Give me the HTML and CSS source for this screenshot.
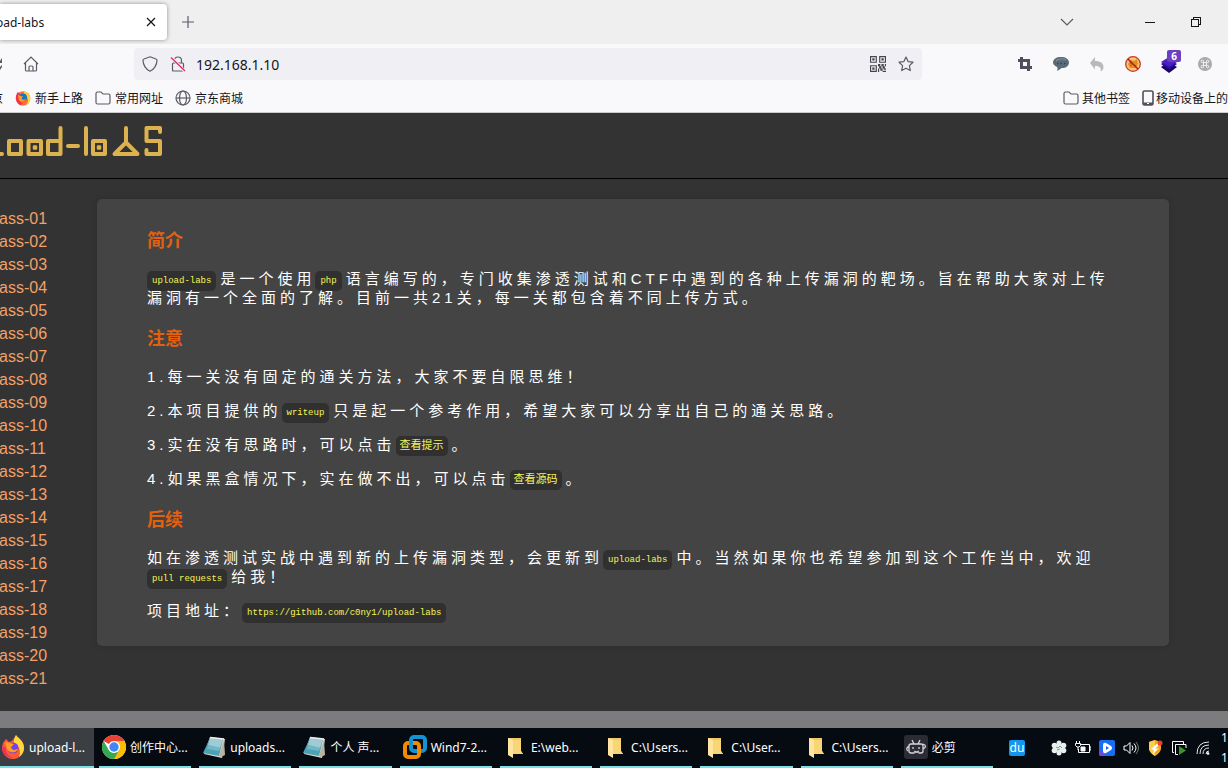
FILE: index.html
```html
<!DOCTYPE html>
<html lang="zh-CN">
<head>
<meta charset="utf-8">
<title>upload-labs</title>
<link rel="stylesheet" href="styles.css">
</head>
<body>
<div class="screen">
  <div class="tabstrip">
    <div class="tab">
      <span class="tab-title">oad-labs</span>
      <button class="icon-btn" aria-label="关闭标签页"><svg width="10" height="10" viewBox="0 0 10 10" class="line"><path d="M1 1l8 8M9 1L1 9"/></svg></button>
    </div>
    <button class="icon-btn new-tab" aria-label="新建标签页"><svg width="14" height="14" viewBox="0 0 14 14" class="line grey"><path d="M7 1v12M1 7h12"/></svg></button>
    <div class="window-controls">
      <button class="icon-btn" aria-label="列出标签页"><svg width="14" height="10" viewBox="0 0 14 10" class="line grey"><path d="M1 2l6 6 6-6"/></svg></button>
      <button class="icon-btn minimize" aria-label="最小化"><svg width="10" height="10" viewBox="0 0 10 10" class="line crisp"><path d="M0 5.5h10"/></svg></button>
      <button class="icon-btn" aria-label="还原"><svg width="10" height="10" viewBox="0 0 10 10" class="line crisp"><path d="M.5 2.5h7v7h-7zM2.500 2.500v-2h7v7h-2"/></svg></button>
    </div>
  </div>

  <div class="toolbar">
    <button class="icon-btn reload" aria-label="重新载入"><svg width="3" height="16" viewBox="0 0 3 16" fill="#5b5b66"><path d="M2 2v5H0V5zM0 11l2-2v2l-2 3z"/></svg></button>
    <button class="icon-btn home" aria-label="主页"><svg width="16" height="16" viewBox="0 0 16 16" class="line grey"><path d="M1 8l7-7 7 7M2.500 7v7q0 1 1 1h9q1 0 1-1V7M6 15v-4q0-1 1-1h2q1 0 1 1v4"/></svg></button>
    <div class="urlbar">
      <svg width="16" height="16" viewBox="0 0 16 16" class="line grey"><path d="M8 .8L14 3q1 .3 1 1.300C15 9 12 13.500 8 15.200 4 13.500 1 9 1 4.300Q1 3.300 2 3z"/></svg>
      <svg width="16" height="16" viewBox="0 0 16 16" class="line grey"><path d="M4.500 7V4.500a3.500 3.500 0 0 1 7 0V7M2.500 14V8q0-1 1-1h9q1 0 1 1v6q0 1-1 1h-9q-1 0-1-1z"/><path d="M1.500 1.500l13 13.500" stroke="#f0f0f4" stroke-width="3"/><path d="M1 1.500l14 13.500" stroke="#e2225b"/></svg>
      <input class="url" type="text" value="192.168.1.10" aria-label="地址栏">
      <svg width="16" height="16" viewBox="0 0 14 14" fill="#45454f"><path fill-rule="evenodd" d="M0 0h6v6H0zM1 1v4h4V1zM2 2h2v2H2zM8 0h6v6H8zM9 1v4h4V1zM10 2h2v2h-2zM0 8h6v6H0zM1 9v4h4V9zM2 10h2v2H2zM7 7h2v2H7zM10 7h2v2h-2zM13 7h1v2h-1zM8 9h2v2H8zM11 9h2v2h-2zM7 11h1v3H7zM9 11h2v2H9zM12 11h2v1h-2zM11 13h3v1h-3z"/></svg>
      <svg width="16" height="16" viewBox="0 0 16 16" class="line grey"><path d="M8 1l2.100 4.600 4.900.6-3.600 3.400.9 5L8 12.200l-4.300 2.400.9-5L1 6.200l4.900-.6z" stroke-linejoin="round"/></svg>
    </div>
    <div class="extensions">
      <button class="icon-btn" aria-label="截图"><svg width="16" height="16" viewBox="0 0 16 16" fill="none" stroke="#50505c" stroke-width="3"><path d="M1 4.500h10.500V15M15 11.500H4.500V1"/></svg></button>
      <button class="icon-btn" aria-label="评论"><svg width="18" height="16" viewBox="0 0 18 16"><path d="M9 1c4.500 0 8 2 8 5.500s-3 5.500-7 5.500c-1 0-2 1.500-5 3 1-2 .5-3 0-4C2.500 9.500 1 8.500 1 6.500 1 3 4.500 1 9 1z" fill="#596b78"/><path d="M4 5c2-2 7-3 10-1" fill="none" stroke="#8798a3"/><path d="M5 7.500h1.500M8.500 7.500H10M12 7.500h1.500" stroke="#34444f" stroke-width="1.500"/></svg></button>
      <button class="icon-btn" aria-label="撤销"><svg width="16" height="16" viewBox="0 0 16 16" fill="#b9b9bd"><path d="M6 1v4c5 0 8.500 2 8.500 6 0 2-1 3.500-3 4.500 1-3 0-5.500-5.500-5.500v3.500L1 7z"/></svg></button>
      <button class="icon-btn" aria-label="屏蔽"><svg width="16" height="16" viewBox="0 0 16 16"><circle cx="8" cy="8" r="7" fill="#f8c477"/><path d="M3 8l3-4 3 1 3-2 1 5-2 4H5z" fill="#e88a1c"/><path d="M5 10l3-2 3 2M5 5l1 3" stroke="#b65a18" fill="none"/><circle cx="8" cy="8" r="7.300" fill="none" stroke="#c5371d" stroke-width="1.300"/><path d="M3 3l10 10" stroke="#a8241d" stroke-width="1.500"/></svg></button>
      <button class="icon-btn layers" aria-label="扩展，6 项"><svg width="18" height="18" viewBox="0 0 18 18"><path d="M1 12l8-5 8 5-8 6z" fill="#17035e"/><path d="M1 9l8-5 8 5-8 6z" fill="#2b0b9e"/><path d="M1 7l8-5 8 5-8 5z" fill="#4c1fc0"/></svg><span class="count">6</span></button>
      <button class="icon-btn" aria-label="快捷键"><svg width="14" height="14" viewBox="0 0 14 14"><circle cx="7" cy="7" r="7" fill="#a9a9ab"/><path d="M5.500 5.500h3v3h-3zM5.500 5.500H4.300a1.200 1.200 0 1 1 1.200-1.200zM8.500 5.500V4.300a1.200 1.200 0 1 1 1.200 1.200zM8.500 8.500h1.200a1.200 1.200 0 1 1-1.200 1.200zM5.500 8.500v1.200a1.200 1.200 0 1 1-1.200-1.200z" fill="none" stroke="#f2f2f2"/></svg></button>
    </div>
  </div>

  <div class="bookmarks">
    <span class="cut-mark">京</span>
    <a class="bookmark" href="#"><svg width="16" height="16" viewBox="0 0 16 16"><circle cx="8" cy="8.500" r="7.300" fill="#ff7139"/><path d="M9 1c3 1 6.500 4 6.300 8-.3 3-2 5-4 6 3-4 2-8-2-10z" fill="#ffd43b"/><path d="M1 6l1.500-4L5 4l-1 6 4 4-3 1C2 13 .5 10 1 6z" fill="#f0334f"/><circle cx="8" cy="7.500" r="4" fill="#1478c8"/><path d="M3 5l3 1 2 .5L6.500 8c1 2.500 3 2 4.500 1-1 3-5 3.500-7 1z" fill="#ff9b2b"/></svg>新手上路</a>
    <a class="bookmark" href="#"><svg width="16" height="16" viewBox="0 0 16 16" class="line grey"><path d="M1 12.500v-9q0-1.500 1.500-1.500h3q1 0 1.500 1t1.500 1h5Q15 4 15 5.500v7q0 1.500-1.500 1.500h-11Q1 14 1 12.500z"/></svg>常用网址</a>
    <a class="bookmark" href="#"><svg width="16" height="16" viewBox="0 0 16 16" class="line grey"><circle cx="8" cy="8" r="7"/><ellipse cx="8" cy="8" rx="3.500" ry="7"/><path d="M1 8h14"/></svg>京东商城</a>
    <a class="bookmark other" href="#"><svg width="16" height="16" viewBox="0 0 16 16" class="line grey"><path d="M1 12.500v-9q0-1.500 1.500-1.500h3q1 0 1.500 1t1.500 1h5Q15 4 15 5.500v7q0 1.500-1.500 1.500h-11Q1 14 1 12.500z"/></svg>其他书签</a>
    <a class="bookmark mobile" href="#"><svg width="12" height="16" viewBox="0 0 12 16"><rect x="1" y="1" width="10" height="14" rx="1.500" fill="none" stroke="#50505c" stroke-width="1.600"/><path d="M1 12.500h10V15H1z" fill="#50505c"/><path d="M5 13.500h2" stroke="#fff"/></svg>移动设备上的</a>
  </div>

  <main class="page">
    <header class="site-head">
      <svg class="logo" role="img" aria-label="upload-labs" width="166" height="36" viewBox="0 0 166 36" fill="none" stroke="#dcb24f" stroke-width="4" stroke-linejoin="round" stroke-linecap="round">
        <path d="M-3 30H2"/>
        <path d="M9 17h12v13H9z"/>
        <path d="M28.500 17H41v13H28.500z"/>
        <path d="M48 17h12.500v13H48zM60.500 17V4"/>
        <path d="M68 22h10"/>
        <path d="M86 4v26"/>
        <path d="M93 17h12v13H93z"/>
        <path d="M126 4v14M126 18.500L114.500 30h23z"/>
        <path d="M160 8V4h-13.500v13H160v13h-13.500v-4"/>
        <path d="M34 22.500h2v2h-2zM98 22.500h2v2h-2z" stroke-width="2.500"/>
      </svg>
    </header>
    <div class="columns">
      <nav>
        <ul class="levels">
          <li><a href="#">ass-01</a></li><li><a href="#">ass-02</a></li><li><a href="#">ass-03</a></li>
          <li><a href="#">ass-04</a></li><li><a href="#">ass-05</a></li><li><a href="#">ass-06</a></li>
          <li><a href="#">ass-07</a></li><li><a href="#">ass-08</a></li><li><a href="#">ass-09</a></li>
          <li><a href="#">ass-10</a></li><li><a href="#">ass-11</a></li><li><a href="#">ass-12</a></li>
          <li><a href="#">ass-13</a></li><li><a href="#">ass-14</a></li><li><a href="#">ass-15</a></li>
          <li><a href="#">ass-16</a></li><li><a href="#">ass-17</a></li><li><a href="#">ass-18</a></li>
          <li><a href="#">ass-19</a></li><li><a href="#">ass-20</a></li><li><a href="#">ass-21</a></li>
        </ul>
      </nav>
      <article class="panel">
        <h3>简介</h3>
        <p><code>upload-labs</code>是一个使用<code>php</code>语言编写的，专门收集渗透测试和CTF中遇到的各种上传漏洞的靶场。旨在帮助大家对上传漏洞有一个全面的了解。目前一共21关，每一关都包含着不同上传方式。</p>
        <h3>注意</h3>
        <p>1.每一关没有固定的通关方法，大家不要自限思维！</p>
        <p>2.本项目提供的<code>writeup</code>只是起一个参考作用，希望大家可以分享出自己的通关思路。</p>
        <p>3.实在没有思路时，可以点击<code class="han">查看提示</code>。</p>
        <p>4.如果黑盒情况下，实在做不出，可以点击<code class="han">查看源码</code>。</p>
        <h3>后续</h3>
        <p>如在渗透测试实战中遇到新的上传漏洞类型，会更新到<code>upload-labs</code>中。当然如果你也希望参加到这个工作当中，欢迎<code>pull requests</code>给我！</p>
        <p>项目地址：<code>https://github.com/c0ny1/upload-labs</code></p>
      </article>
    </div>
  </main>
  <div class="footer-bar"></div>

  <svg width="0" height="0" class="defs" aria-hidden="true">
    <symbol id="notepad" viewBox="0 0 24 24"><path d="M8 2l15 2-3 19-18-4z" fill="#ddd8ca"/><path d="M8 3l13 1-4 17L1 18z" fill="#4ba1b5"/><path d="M8 3l13 1-3 9-12-3z" fill="#9fccd4"/><path d="M6 10l12 3-1 3-12-2z" fill="#72b7c5"/><path d="M8 2.500l14 1.500" stroke="#eee" stroke-width="1.500"/><path d="M22 5l1 15-4 2-2-1z" fill="#b9b2a4"/></symbol>
    <symbol id="folder" viewBox="0 0 24 24"><path d="M5 3h13v13l2 3H8z" fill="#f3c965"/><path d="M5 3l5 2v18l-5-3z" fill="#ffe4a1"/><path d="M10 5h8v11l2 3H10z" fill="#f8d675"/></symbol>
  </svg>
  <footer class="taskbar">
    <button class="task active"><svg width="24" height="24" viewBox="0 0 24 24"><path d="M2 8l3-4 3 3 3-1 4-6c2 3 8 5 8 13 0 6-5 11-11 11S1 19 1 13z" fill="#ff5a36"/><path d="M15 0c2 4 8 5 8 13 0 4-2 7-5 9 2-5 1-10-4-13-2-2-1-5 1-9z" fill="#ffd83c"/><path d="M1 11c0 9 6 12 12 12-6-2-9-5-8-10z" fill="#ee2f66"/><circle cx="12" cy="13" r="5.500" fill="#7542e5"/><path d="M4 7l5 1 4 1-3 3c1 4 4 3 7 2-2 5-9 4-11 0z" fill="#ff9d24"/></svg><span>upload-l...</span></button>
    <div class="tasks">
      <button class="task"><svg width="24" height="24" viewBox="0 0 24 24"><circle cx="12" cy="12" r="12" fill="#fff"/><path d="M12 12L1.600 6A12 12 0 0 1 22.400 6z" fill="#e94235"/><path d="M12 12V6h10.400A12 12 0 0 1 12 24z" fill="#fbbc04"/><path d="M12 24A12 12 0 0 1 1.600 6l5.200 9L12 18l5.200-3z" fill="#34a853"/><circle cx="12" cy="12" r="6" fill="#fff"/><circle cx="12" cy="12" r="4.700" fill="#4285f4"/></svg><span>创作中心...</span></button>
      <button class="task"><svg width="24" height="24"><use href="#notepad"/></svg><span>uploads...</span></button>
      <button class="task"><svg width="24" height="24"><use href="#notepad"/></svg><span>个人 声...</span></button>
      <button class="task"><svg width="24" height="24" viewBox="0 0 24 24" fill="none" stroke-width="4"><rect x="8" y="2" width="14" height="14" rx="3" stroke="#1393d1"/><rect x="2" y="8" width="14" height="14" rx="3" stroke="#f38b00"/><path d="M8 11V6" stroke="#1393d1"/></svg><span>Wind7-2...</span></button>
      <button class="task"><svg width="24" height="24"><use href="#folder"/></svg><span>E:\web...</span></button>
      <button class="task"><svg width="24" height="24"><use href="#folder"/></svg><span>C:\Users...</span></button>
      <button class="task"><svg width="24" height="24"><use href="#folder"/></svg><span>C:\User...</span></button>
      <button class="task"><svg width="24" height="24"><use href="#folder"/></svg><span>C:\Users...</span></button>
      <button class="task"><svg width="24" height="24" viewBox="0 0 24 24"><rect width="24" height="24" rx="3" fill="#2b2b35"/><path d="M7 9h10q2 0 2 2v5q0 2-2 2h-2M10 18H7q-2 0-2-2v-5q0-2 2-2M8 5l2 4M16 5l-2 4M5 11q-4 3-1 5M19 9q5 2 0 5M9 12v2M15 12v2M10 18l5-2M10 16l5 2" fill="none" stroke="#d6d6dc" stroke-width="1.300"/></svg><span>必剪</span></button>
    </div>
    <div class="tray">
      <span class="ime">du</span>
      <svg width="16" height="16" viewBox="0 0 16 16"><g fill="#e9efeb"><circle cx="8" cy="3" r="2.500"/><circle cx="8" cy="13" r="2.500"/><circle cx="3.500" cy="5.500" r="2.800"/><circle cx="12.500" cy="5.500" r="2.800"/><circle cx="3.500" cy="10.500" r="2.800"/><circle cx="12.500" cy="10.500" r="2.800"/><circle cx="8" cy="8" r="3.500"/></g><path d="M5 7l2 1 2-2 2 2M6 10l3-1" stroke="#5ca5b8" fill="none"/></svg>
      <svg width="16" height="16" viewBox="0 0 16 16" fill="none" stroke="#fff"><path d="M6 4.500h8.500v8H3.500V9M14.500 7H16v3h-1.500M1.500 1v3M4.500 1v3M.5 3.500h5v2L4 7H2L.5 5.500zM3 7v3"/><path d="M6 7h4v4H6z" fill="#fff"/></svg>
      <svg width="16" height="16" viewBox="0 0 16 16"><rect width="16" height="16" rx="2" fill="#176ef2"/><path d="M0 9l7 7H2q-2 0-2-2z" fill="#7844e8"/><path d="M4 5q0-3 3-2l5 3q2 2 0 4l-5 3q-3 1-3-2z" fill="#fff"/><path d="M7 6l3 2-3 2z" fill="#2765eb"/></svg>
      <svg width="16" height="16" viewBox="0 0 16 16" fill="none" stroke="#fff"><path d="M1 6h2.500L7 2.500v11L3.500 10H1zM9 5.500q2 2.500 0 5M11 3.500q4 4.500 0 9"/><path d="M13 2q5 6 0 12" stroke="#777"/></svg>
      <svg width="16" height="16" viewBox="0 0 16 16"><path d="M8 0l6 2v7q-1 4-6 7-5-3-6-7V2z" fill="#f7a51d"/><path d="M8 0v16q-5-3-6-7V2z" fill="#ffcc4a"/><path d="M4 9l7-6v3l-3 3 4-1-6 6 1-4z" fill="#fff"/><circle cx="13" cy="3" r="2.500" fill="#ee3e25"/></svg>
      <svg width="16" height="16" viewBox="0 0 16 16"><path d="M3 12.500H1.500v-11h11V4M7 14.500H4.500v-10H15V8" fill="none" stroke="#fff"/><path d="M8 6l7 4.500L8 15z" fill="#3c9427"/></svg>
      <svg width="16" height="16" viewBox="0 0 16 16" fill="none" stroke="#e5e5e5"><path d="M2 14Q2 2 14 2M5 14q0-9 9-9M8 14q0-6 6-6M11 14q0-3 3-3"/><circle cx="13" cy="13.500" r="1" fill="#fff"/></svg>
      <div class="clock"><span>1</span><span>1</span></div>
    </div>
  </footer>
</div>
</body>
</html>
```

FILE: styles.css
```css
* { box-sizing: border-box; }
body { margin: 0; font-family: "Noto Sans", "Noto Sans CJK SC", sans-serif; font-size: 12px; color: #15141a; }
svg { display: block; flex: none; }
a { color: inherit; text-decoration: none; }
button { border: 0; background: none; font: inherit; color: inherit; padding: 0; }
.line { fill: none; stroke: #15141a; stroke-width: 1.2; }
.grey { stroke: #5b5b66; }
.crisp { stroke-width: 1; shape-rendering: crispEdges; }
.screen { min-height: 100vh; display: flex; flex-direction: column; overflow: hidden; background: #333; }
.icon-btn { display: flex; align-items: center; justify-content: center; flex: none; }

.tabstrip { display: flex; align-items: center; height: 44px; background: #efefef; }
.tab { display: flex; align-items: center; justify-content: space-between; width: 167px; height: 36px; padding-right: 11px; border-radius: 0 4px 4px 0; background: #fff; box-shadow: 0 0 4px rgba(0, 0, 0, .4); }
.tab-title { margin-left: -4px; }
.new-tab { margin-left: 14px; }
.window-controls { display: flex; align-items: center; gap: 36px; margin-left: auto; padding-right: 27px; }
.minimize { margin-left: 35px; }

.toolbar { display: flex; align-items: center; height: 40px; background: #f9f9fb; padding-right: 5px; }
.home { margin-left: 20px; }
.urlbar { display: flex; align-items: center; gap: 12px; flex: 1; height: 32px; margin: 0 85px 0 95px; padding: 0 8px; border-radius: 4px; background: #f0f0f4; }
.url { flex: 1; min-width: 0; border: 0; padding: 0; margin-left: -2px; background: none; font: inherit; font-size: 14px; color: #15141a; }
.extensions { display: flex; }
.extensions .icon-btn { width: 36px; height: 32px; }
.layers { position: relative; }
.count { position: absolute; top: 2px; right: 6px; width: 14px; border-radius: 2px; background: #6a3fc0; color: #fff; font-weight: 700; font-size: 10px; line-height: 12px; text-align: center; }

.bookmarks { display: flex; align-items: center; height: 29px; background: #f9f9fb; border-bottom: 1px solid #ccc; white-space: nowrap; }
.cut-mark { width: 3px; margin-right: 12px; direction: rtl; overflow: hidden; }
.bookmark { display: flex; align-items: center; gap: 4px; margin-right: 12px; }
.other { gap: 3px; margin-left: auto; }
.mobile { gap: 2px; margin-right: 0; }

.page { flex: 1; background: #333; font-family: "Liberation Sans", "Noto Sans CJK SC", sans-serif; }
.site-head { height: 66px; padding-top: 11px; border-bottom: 1px solid #000; }
.columns { display: flex; align-items: flex-start; padding: 20px 59px 20px 0; }
nav { flex: none; width: 97px; }
.levels { list-style: none; margin: 8px 0 0 -1px; padding: 0; font-size: 16px; line-height: 23px; color: #f4a068; }
.panel { flex: 1; min-width: 0; padding: 10px 50px 11px; border-radius: 5px; background: #444; color: #fff; box-shadow: 0 0 6px rgba(0, 0, 0, .15); }
.panel h3 { margin: 20px 0 16px; font-size: 18px; line-height: 24px; color: #e4600c; }
.panel p { margin: 15px 0; font-size: 15px; line-height: 19px; letter-spacing: 4px; }
code { margin-right: 4px; padding: 5px; border-radius: 5px; background: #303030; color: #f5f55a; font-family: "Liberation Mono", "Noto Sans CJK SC", monospace; font-size: 9px; line-height: 1; letter-spacing: 0; vertical-align: 1px; white-space: nowrap; }
.han { padding: 4px; font-size: 11px; }

.footer-bar { height: 17px; background: #7c7b7e; }
.defs { position: absolute; }
.taskbar { display: flex; height: 40px; background: #060b12; color: #fff; }
.task { display: flex; align-items: center; gap: 4px; min-width: 0; padding: 0 0 0 3px; border-bottom: 2px solid #7be0e5; white-space: nowrap; overflow: hidden; }
.active { flex: none; width: 94px; padding-left: 1px; background: #3b3f44; }
.tasks { display: flex; flex: 1; gap: 8px; margin-left: 5px; min-width: 0; }
.tasks .task { flex: 1; }
.tray { display: flex; align-items: center; gap: 8px; flex: none; margin-left: 16px; }
.ime { width: 16px; margin-right: 18px; background: #1296f0; border-radius: 2px; line-height: 16px; text-align: center; }
.clock { display: flex; flex-direction: column; width: 9px; padding-left: 2px; line-height: 20px; }
```
